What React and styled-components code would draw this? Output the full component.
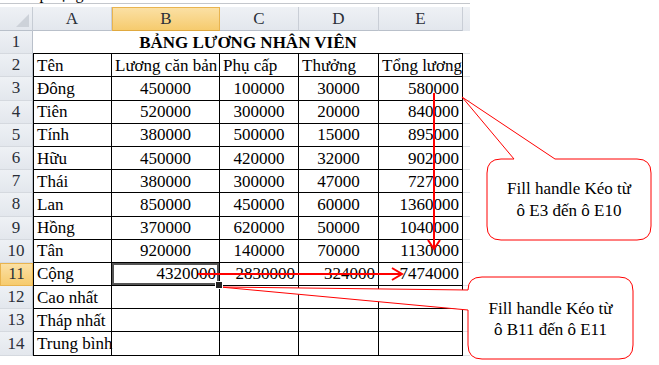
import React from "react";
import styled, { createGlobalStyle, css } from "styled-components";

const SERIF = `"Liberation Serif", "Times New Roman", "DejaVu Serif", serif`;

const GlobalStyle = createGlobalStyle`
  html, body { margin: 0; padding: 0; background: #fff; }
  * { box-sizing: border-box; }
  body { font-family: ${SERIF}; color: #000; }
`;

const Page = styled.div`
  position: relative;
  width: 659px;
  height: 365px;
  overflow: hidden;
  background: #fff;
  font-family: ${SERIF};
`;

const TopClip = styled.div`
  height: 3px;
  overflow: hidden;
`;

const TopText = styled.div`
  margin-top: -15px;
  padding-left: 28px;
  font-family: ${SERIF};
  font-size: 16px;
  line-height: 18px;
  white-space: nowrap;
`;

const Rule = styled.div`
  height: 1px;
  width: 470px;
  background: #c4c7cc;
  margin-bottom: 3px;
`;

const Sheet = styled.div`
  display: grid;
  grid-template-columns: 33px 79px 108px 79px 80px 84px 7px;
  grid-template-rows: 24px repeat(14, 23.2px);
  width: 470px;
  font-family: ${SERIF};
  font-size: 17px;
`;

const headerBase = css`
  display: flex;
  align-items: center;
  justify-content: center;
  background: linear-gradient(#eef1f5, #e3e7ed);
  color: #2a2f38;
  font-family: ${SERIF};
  font-size: 17px;
`;

const Corner = styled.div`
  ${headerBase};
  position: relative;
  border-right: 1px solid #c6ccd4;
  border-bottom: 1px solid #b9c0ca;
  &::after {
    content: "";
    position: absolute;
    right: 3px;
    bottom: 3px;
    width: 0;
    height: 0;
    border-left: 13px solid transparent;
    border-bottom: 13px solid #cdd2d9;
  }
`;

const ColHeader = styled.div`
  ${headerBase};
  border-right: 1px solid #c9ced6;
  border-bottom: 1px solid #b9c0ca;
  ${(p) =>
    p.$active &&
    css`
      background: linear-gradient(#fbe0a4, #f6cb6e);
      border: 1px solid #e9b44f;
      border-bottom-color: #e0a93f;
    `}
`;

const RowHeader = styled.div`
  ${headerBase};
  border-right: 1px solid #b9c0ca;
  border-bottom: 1px solid #d5d9df;
  ${(p) =>
    p.$active &&
    css`
      background: linear-gradient(#fbe0a4, #f6cb6e);
      border: 1px solid #e9b44f;
    `}
`;

const TitleCell = styled.div`
  grid-column: span 5;
  display: flex;
  align-items: center;
  justify-content: center;
  font-family: ${SERIF};
  font-weight: bold;
  font-size: 17px;
  border-bottom: 1px solid #000;
  padding-top: 1px;
`;

const Cell = styled.div`
  position: relative;
  display: flex;
  align-items: center;
  justify-content: ${(p) =>
    p.$align === "right" ? "flex-end" : p.$align === "center" ? "center" : "flex-start"};
  padding: 1px 3px 0 3px;
  font-family: ${SERIF};
  border-right: 1px solid #000;
  border-bottom: 1px solid #000;
  border-left: ${(p) => (p.$first ? "1px solid #000" : "none")};
  white-space: nowrap;
  ${(p) =>
    p.$selected &&
    css`
      box-shadow: inset 0 0 0 2px #555;
      &::after {
        content: "";
        position: absolute;
        right: -4px;
        bottom: -4px;
        width: 6px;
        height: 6px;
        background: #222;
        border: 1px solid #fff;
        z-index: 2;
      }
    `}
`;

const FillerCell = styled.div`
  border-bottom: 1px solid #dfe2e6;
`;

const HeaderFiller = styled.div`
  ${headerBase};
`;

const Overlay = styled.svg`
  position: absolute;
  left: 0;
  top: 0;
  width: 659px;
  height: 365px;
  pointer-events: none;
`;

const CalloutText = styled.div`
  position: absolute;
  left: ${(p) => p.$x}px;
  top: ${(p) => p.$y}px;
  width: ${(p) => p.$w}px;
  text-align: center;
  font-family: ${SERIF};
  font-size: 17px;
  line-height: ${(p) => p.$lh}px;
  color: #000;
`;

const cols = ["A", "B", "C", "D", "E"];

const body = [
  ["Đông", 450000, 100000, 30000, 580000],
  ["Tiên", 520000, 300000, 20000, 840000],
  ["Tính", 380000, 500000, 15000, 895000],
  ["Hữu", 450000, 420000, 32000, 902000],
  ["Thái", 380000, 300000, 47000, 727000],
  ["Lan", 850000, 450000, 60000, 1360000],
  ["Hồng", 370000, 620000, 50000, 1040000],
  ["Tân", 920000, 140000, 70000, 1130000],
];

export default function App() {
  const rows = [];
  const heads = ["Tên", "Lương căn bản", "Phụ cấp", "Thưởng", "Tổng lương"];
  rows.push(
    <React.Fragment key="r2">
      <RowHeader>2</RowHeader>
      {heads.map((h, i) => (
        <Cell key={i} $first={i === 0}>{h}</Cell>
      ))}
      <FillerCell />
    </React.Fragment>
  );
  body.forEach((r, ri) => {
    rows.push(
      <React.Fragment key={"b" + ri}>
        <RowHeader>{ri + 3}</RowHeader>
        {r.map((v, i) => (
          <Cell
            key={i}
            $first={i === 0}
            $align={i === 0 ? "left" : i === 4 ? "right" : "center"}
          >
            {v}
          </Cell>
        ))}
        <FillerCell />
      </React.Fragment>
    );
  });
  const total = ["Cộng", 4320000, 2830000, 324000, 7474000];
  rows.push(
    <React.Fragment key="r11">
      <RowHeader $active>11</RowHeader>
      {total.map((v, i) => (
        <Cell key={i} $first={i === 0} $align={i === 0 ? "left" : "right"} $selected={i === 1}>
          {v}
        </Cell>
      ))}
      <FillerCell />
    </React.Fragment>
  );
  ["Cao nhất", "Tháp nhất", "Trung bình"].forEach((n, k) => {
    rows.push(
      <React.Fragment key={"e" + k}>
        <RowHeader>{12 + k}</RowHeader>
        <Cell $first>{n}</Cell>
        <Cell />
        <Cell />
        <Cell />
        <Cell />
        <FillerCell />
      </React.Fragment>
    );
  });

  return (
    <Page>
      <GlobalStyle />
      <TopClip>
        <TopText>Áp dụng</TopText>
      </TopClip>
      <Rule />
      <Sheet>
        <Corner />
        {cols.map((c) => (
          <ColHeader key={c} $active={c === "B"}>{c}</ColHeader>
        ))}
        <HeaderFiller />
        <RowHeader>1</RowHeader>
        <TitleCell>BẢNG LƯƠNG NHÂN VIÊN</TitleCell>
        <FillerCell />
        {rows}
      </Sheet>

      <Overlay viewBox="0 0 659 365">
        <line x1="434" y1="93" x2="434" y2="249" stroke="#ff0000" strokeWidth="2" />
        <polyline points="428,240 434,249 440,240" fill="none" stroke="#ff0000" strokeWidth="2" />
        <line x1="198" y1="274" x2="402" y2="274" stroke="#ff0000" strokeWidth="2" />
        <polyline points="392,268 402,274 392,280" fill="none" stroke="#ff0000" strokeWidth="2" />
        <path
          d="M501,159 L514,159 L462,97 L555,159 L637,159 Q651,159 651,173 L651,226 Q651,240 637,240 L501,240 Q487,240 487,226 L487,173 Q487,159 501,159 Z"
          fill="#fff"
          stroke="#ff0000"
          strokeWidth="1"
        />
        <path
          d="M482,277 L619,277 Q633,277 633,291 L633,345 Q633,359 619,359 L482,359 Q468,359 468,345 L468,310 L220,287 L468,290 Q468,277 482,277 Z"
          fill="#fff"
          stroke="#ff0000"
          strokeWidth="1"
        />
      </Overlay>
      <CalloutText $x={487} $y={178} $w={164} $lh={22}>
        Fill handle Kéo từ
        <br />
        ô E3 đến ô E10
      </CalloutText>
      <CalloutText $x={468} $y={298} $w={165} $lh={21}>
        Fill handle Kéo từ
        <br />
        ô B11 đến ô E11
      </CalloutText>
    </Page>
  );
}
